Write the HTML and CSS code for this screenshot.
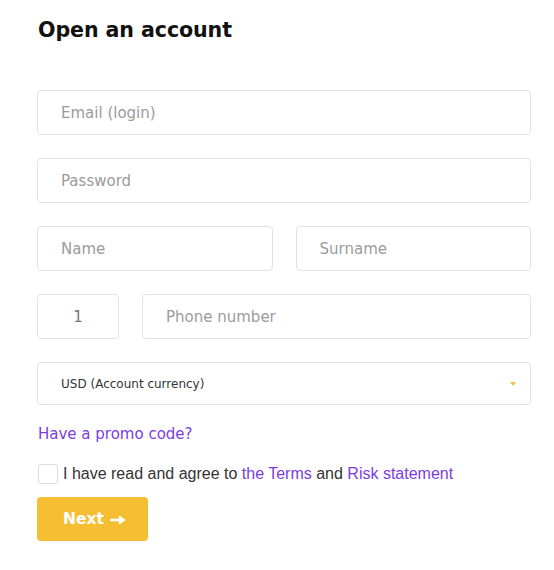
FILE: index.html
```html
<!DOCTYPE html>
<html lang="en">
<head>
<meta charset="utf-8">
<title>Open an account</title>
<link rel="stylesheet" href="styles.css">
</head>
<body>
<main class="form">
  <h1 class="title">Open an account</h1>
  <div class="fields">
    <div class="field"><span class="ph">Email (login)</span></div>
    <div class="field"><span class="ph">Password</span></div>
    <div class="row row-half">
      <div class="field"><span class="ph">Name</span></div>
      <div class="field"><span class="ph">Surname</span></div>
    </div>
    <div class="row row-phone">
      <div class="field code"><span class="val">1</span></div>
      <div class="field"><span class="ph">Phone number</span></div>
    </div>
    <div class="field select">
      <span class="val-sm">USD (Account currency)</span>
      <span class="caret"></span>
    </div>
  </div>
  <a class="promo" href="#">Have a promo code?</a>
  <label class="agree">
    <span class="box"></span>
    <span class="agree-text">I have read and agree to <a href="#">the Terms</a> and <a href="#">Risk statement</a></span>
  </label>
  <button class="next" type="button">Next
    <svg class="arrow" width="17" height="10" viewBox="0 0 17 10"><path d="M1 5H14M10 1.5L14.5 5L10 8.5" fill="none" stroke="#fff" stroke-width="2.4" stroke-linejoin="miter"/></svg>
  </button>
</main>
</body>
</html>
```

FILE: styles.css
```css
html, body {
  margin: 0;
  padding: 0;
  background: #fff;
}
body {
  font-family: "DejaVu Sans", "Noto Sans", sans-serif;
  color: #222;
}
.form {
  width: 494px;
  padding: 0 23px 0 37px;
}
.title {
  margin: 0;
  padding-top: 17px;
  font-size: 20.6px;
  line-height: 26px;
  font-weight: bold;
  color: #111;
  letter-spacing: -0.1px;
  padding-left: 1px;
}
.fields {
  margin-top: 47px;
  display: flex;
  flex-direction: column;
  gap: 23px;
}
.row {
  display: flex;
  gap: 23px;
}
.row-half .field {
  flex: 1;
}
.row-phone .field {
  flex: 1;
}
.row-phone .code {
  flex: 0 0 82px;
  justify-content: center;
  padding: 0;
}
.field {
  box-sizing: border-box;
  height: 45px;
  border: 1px solid #e2e2e2;
  border-radius: 4px;
  padding: 0 22px 0 23px;
  display: flex;
  align-items: center;
}
.ph {
  font-size: 15px;
  color: #9b9b9b;
}
.val {
  font-size: 15px;
  color: #777;
}
.select {
  height: 43px;
  justify-content: space-between;
}
.val-sm {
  font-size: 12px;
  color: #333;
}
.caret {
  width: 0;
  height: 0;
  border-left: 3.5px solid transparent;
  border-right: 3.5px solid transparent;
  border-top: 4px solid #f4c13e;
  margin-right: -8px;
  margin-top: 1px;
}
.promo {
  display: block;
  margin-top: 19px;
  font-size: 15px;
  line-height: 20px;
  color: #7b3de0;
  text-decoration: none;
  padding-left: 1px;
}
.agree {
  display: flex;
  align-items: center;
  margin-top: 20px;
  gap: 5px;
}
.box {
  box-sizing: border-box;
  width: 20px;
  height: 20px;
  border: 1px solid #dcdcdc;
  border-radius: 3px;
  margin-left: 1px;
}
.agree-text {
  font-family: "Liberation Sans", Arial, sans-serif;
  font-size: 16px;
  color: #333;
}
.agree-text a {
  color: #7b3de0;
  text-decoration: none;
}
.next {
  margin-top: 13px;
  box-sizing: border-box;
  width: 111px;
  height: 44px;
  border: none;
  border-radius: 4px;
  background: #f6bf33;
  color: #fff;
  font-family: "DejaVu Sans", sans-serif;
  font-weight: bold;
  font-size: 15.5px;
  padding: 0 0 0 26px;
  display: flex;
  align-items: center;
  gap: 5px;
}
.arrow {
  display: block;
  margin-top: 1px;
}
```
